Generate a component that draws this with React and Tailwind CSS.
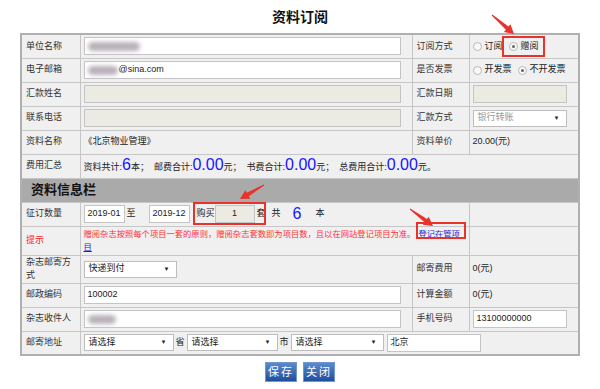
import React from 'react'

const cell = 'border border-[#c6c6c6] bg-[#f0f0f0] px-[3px] align-middle'
const label = 'border border-[#c6c6c6] bg-[#f0f0f0] px-[4px] align-middle text-[#333]'
const blue = 'text-[16px] leading-none text-[#1515ff]'

function Radio({ checked }) {
  return (
    <span className="relative inline-block h-[9px] w-[9px] shrink-0 rounded-full border border-[#b8b8b8] bg-[#f8f8f8]">
      {checked && <span className="absolute inset-[2px] rounded-full bg-[#666]" />}
    </span>
  )
}

function Select({ text, w, muted }) {
  return (
    <div
      className={`flex h-[17px] shrink-0 items-center justify-between border border-[#bdbdbd] bg-white pl-[4px] pr-[6px] ${muted ? 'text-[#999]' : 'text-[#222]'}`}
      style={{ width: w }}
    >
      <span>{text}</span>
      <span className="text-[6px] text-[#222]">▼</span>
    </div>
  )
}

function Input({ w = 317, value, disabled, center, children }) {
  return (
    <div
      className={`flex h-[18px] shrink-0 items-center whitespace-nowrap border border-[#c4c4c4] px-[3px] ${disabled ? 'bg-[#ebebe4]' : 'bg-white'} ${center ? 'justify-center' : ''}`}
      style={{ width: w }}
    >
      {children ?? value}
    </div>
  )
}

function Blur({ w }) {
  return <span className="inline-block h-[9px] rounded-full bg-[#b9b0b9] blur-[2px]" style={{ width: w }} />
}

function Arrow({ x1, y1, x2, y2 }) {
  const dx = x2 - x1
  const dy = y2 - y1
  const len = Math.hypot(dx, dy)
  const ux = dx / len
  const uy = dy / len
  const nx = -uy
  const ny = ux
  const hx = x2 - ux * 9
  const hy = y2 - uy * 9
  const pts = [
    [x1 + nx * 0.5, y1 + ny * 0.5],
    [hx + nx * 2, hy + ny * 2],
    [hx + nx * 5, hy + ny * 5],
    [x2, y2],
    [hx - nx * 5, hy - ny * 5],
    [hx - nx * 2, hy - ny * 2],
    [x1 - nx * 0.5, y1 - ny * 0.5],
  ]
  return <polygon points={pts.map((p) => p.join(',')).join(' ')} fill="#e8322c" />
}

export default function App() {
  return (
    <div className="relative h-[389px] w-[600px] overflow-hidden bg-white font-[Liberation_Sans,Noto_Sans_CJK_SC,sans-serif] text-[9px] text-[#222]">
      <div className="flex h-[33px] items-center justify-center pt-[2px] text-[14px] font-bold text-[#111]">资料订阅</div>

      <table className="mx-auto w-[558px] table-fixed border-collapse border-2 border-[#b0b0b0]">
        <colgroup>
          <col className="w-[59px]" />
          <col className="w-[332px]" />
          <col className="w-[57px]" />
          <col className="w-[110px]" />
        </colgroup>
        <tbody>
          <tr className="h-[24px]">
            <td className={label}>单位名称</td>
            <td className={cell}>
              <Input>
                <Blur w={52} />
              </Input>
            </td>
            <td className={label}>订阅方式</td>
            <td className={cell}>
              <div className="flex items-center gap-[3px]">
                <Radio />
                <span className="mr-[3px]">订阅</span>
                <Radio checked />
                <span>赠阅</span>
              </div>
            </td>
          </tr>
          <tr className="h-[24px]">
            <td className={label}>电子邮箱</td>
            <td className={cell}>
              <Input>
                <Blur w={30} />
                <span className="ml-[1px]">@sina.com</span>
              </Input>
            </td>
            <td className={label}>是否发票</td>
            <td className={cell}>
              <div className="flex items-center gap-[3px]">
                <Radio />
                <span className="mr-[3px]">开发票</span>
                <Radio checked />
                <span>不开发票</span>
              </div>
            </td>
          </tr>
          <tr className="h-[24px]">
            <td className={label}>汇款姓名</td>
            <td className={cell}>
              <Input disabled />
            </td>
            <td className={label}>汇款日期</td>
            <td className={cell}>
              <Input w={94} disabled />
            </td>
          </tr>
          <tr className="h-[24px]">
            <td className={label}>联系电话</td>
            <td className={cell}>
              <Input disabled />
            </td>
            <td className={label}>汇款方式</td>
            <td className={cell}>
              <Select text="银行转账" w={94} muted />
            </td>
          </tr>
          <tr className="h-[24px]">
            <td className={label}>资料名称</td>
            <td className={cell}>《北京物业管理》</td>
            <td className={label}>资料单价</td>
            <td className={cell}>20.00(元)</td>
          </tr>
          <tr className="h-[24px]">
            <td className={label}>费用汇总</td>
            <td className={cell} colSpan={3}>
              资料共计:<span className={blue}>6</span>本；&nbsp; 邮费合计:<span className={blue}>0.00</span>元；&nbsp; 书费合计:
              <span className={blue}>0.00</span>元；&nbsp; 总费用合计:<span className={blue}>0.00</span>元。
            </td>
          </tr>
          <tr className="h-[24px]">
            <td colSpan={4} className="border border-[#c6c6c6] bg-[#aaaaaa] px-[9px] text-[13px] font-bold text-[#111]">
              资料信息栏
            </td>
          </tr>
          <tr className="h-[24px]">
            <td className={label}>征订数量</td>
            <td className={cell} colSpan={2}>
              <div className="flex items-center whitespace-nowrap">
                <Input w={41} center value="2019-01" />
                <span className="ml-[2px]">至</span>
                <span className="ml-[13px]">
                  <Input w={41} center value="2019-12" />
                </span>
                <span className="ml-[7px] flex items-center">
                  购买
                  <Input w={40} disabled center value="1" />
                  <span className="ml-[2px]">套</span>
                </span>
                <span className="ml-[6px]">共</span>
                <span className={`${blue} ml-[12px]`}>6</span>
                <span className="ml-[14px]">本</span>
              </div>
            </td>
            <td className={cell} />
          </tr>
          <tr className="h-[29px]">
            <td className={`${label} text-[#ff2020]`}>提示</td>
            <td className={`${cell} text-[8.3px] leading-[13px] text-[#ff3030]`} colSpan={2}>
              赠阅杂志按照每个项目一套的原则，赠阅杂志套数即为项目数，且以在网站登记项目为准。
              <a className="ml-[3px] text-[#1a1ad6] underline">登记在管项目</a>
            </td>
            <td className={cell} />
          </tr>
          <tr className="h-[28px]">
            <td className={`${label} leading-[13px]`}>杂志邮寄方式</td>
            <td className={cell}>
              <Select text="快递到付" w={93} />
            </td>
            <td className={label}>邮寄费用</td>
            <td className={cell}>0(元)</td>
          </tr>
          <tr className="h-[24px]">
            <td className={label}>邮政编码</td>
            <td className={cell}>
              <Input value="100002" />
            </td>
            <td className={label}>计算金额</td>
            <td className={cell}>0(元)</td>
          </tr>
          <tr className="h-[24px]">
            <td className={`${label} whitespace-nowrap`}>杂志收件人</td>
            <td className={cell}>
              <Input>
                <Blur w={28} />
              </Input>
            </td>
            <td className={label}>手机号码</td>
            <td className={cell}>
              <Input w={94} value="13100000000" />
            </td>
          </tr>
          <tr className="h-[24px]">
            <td className={label}>邮寄地址</td>
            <td className={cell} colSpan={3}>
              <div className="flex items-center">
                <Select text="请选择" w={90} />
                <span className="mx-[2px]">省</span>
                <Select text="请选择" w={91} />
                <span className="mx-[2px]">市</span>
                <Select text="请选择" w={93} />
                <span className="ml-[3px]">
                  <Input w={94} value="北京" />
                </span>
              </div>
            </td>
          </tr>
        </tbody>
      </table>

      <div className="mt-[6px] flex justify-center gap-[6px]">
        {['保存', '关闭'].map((t) => (
          <button
            key={t}
            className="h-[20px] w-[32px] border border-[#6f96cf] bg-gradient-to-b from-[#5a8bd0] to-[#1f4f9c] text-[11px] tracking-[2px] text-white"
          >
            {t}
          </button>
        ))}
      </div>

      {/* annotation boxes */}
      <div className="absolute left-[502px] top-[36px] h-[21px] w-[43px] border-2 border-[#e8322c]" />
      <div className="absolute left-[193px] top-[202px] h-[23px] w-[73px] border-2 border-[#e8322c]" />
      <div className="absolute left-[416px] top-[222px] h-[17px] w-[50px] border-2 border-[#e8322c]" />
      <svg className="pointer-events-none absolute left-0 top-0" width="600" height="389">
        <Arrow x1={492} y1={15} x2={514} y2={34} />
        <Arrow x1={264} y1={185} x2={240} y2={199} />
        <Arrow x1={410} y1={209} x2={433} y2={226} />
      </svg>
    </div>
  )
}
